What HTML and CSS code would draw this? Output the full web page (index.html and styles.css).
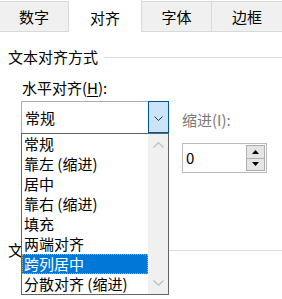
FILE: index.html
```html
<!DOCTYPE html>
<html lang="zh-CN">
<head>
    <meta charset="UTF-8">
    <title>设置单元格格式</title>
    <link rel="stylesheet" href="styles.css">
</head>
<body>

    <div class="dialog">
        <div class="tabs">
            <div class="tab tab-first">数字</div>
            <div class="tab active">对齐</div>
            <div class="tab">字体</div>
            <div class="tab tab-last">边框</div>
        </div>

        <div class="group-title"><span>文本对齐方式</span></div>

        <div class="field-label">水平对齐(<u>H</u>):</div>

        <div class="align-row">
            <div class="combo">
                <span class="combo-value">常规</span>
                <span class="combo-btn">
                    <svg width="9" height="5" viewBox="0 0 9 5"><path d="M0.5 0.5 L4.5 4.5 L8.5 0.5" fill="none" stroke="#333" stroke-width="1"/></svg>
                </span>
            </div>
            <div class="indent">
                <div class="indent-label">缩进(I):</div>
                <div class="spin">
                    <span class="spin-value">0</span>
                    <span class="spin-btns">
                        <span class="spin-btn"><svg width="7" height="4" viewBox="0 0 7 4"><path d="M0 4 L3.5 0 L7 4 Z" fill="#000"/></svg></span>
                        <span class="spin-btn"><svg width="7" height="4" viewBox="0 0 7 4"><path d="M0 0 L3.5 4 L7 0 Z" fill="#000"/></svg></span>
                    </span>
                </div>
            </div>
        </div>

        <!-- second group, mostly hidden under the open list -->
        <div class="group-title second"><span class="clipped">文</span></div>

        <div class="dropdown">
            <ul class="options">
                <li>常规</li>
                <li>靠左 (缩进)</li>
                <li>居中</li>
                <li>靠右 (缩进)</li>
                <li>填充</li>
                <li>两端对齐</li>
                <li class="selected">跨列居中</li>
                <li>分散对齐 (缩进)</li>
            </ul>
            <div class="scrollbar">
                <svg width="11" height="6" viewBox="0 0 11 6"><path d="M0.5 5.5 L5.5 0.8 L10.5 5.5" fill="none" stroke="#c2c2c2" stroke-width="1.4"/></svg>
                <svg width="11" height="6" viewBox="0 0 11 6"><path d="M0.5 0.5 L5.5 5.2 L10.5 0.5" fill="none" stroke="#c2c2c2" stroke-width="1.4"/></svg>
            </div>
        </div>
    </div>

</body>
</html>
```

FILE: styles.css
```css
* {
    margin: 0;
    padding: 0;
    box-sizing: border-box;
}

body {
    font-family: "Noto Sans CJK SC", "Noto Sans", sans-serif;
    font-size: 15px;
    color: #000;
    background-color: #fff;
    width: 282px;
    height: 299px;
    overflow: hidden;
}

.dialog {
    position: relative;
    width: 282px;
    height: 299px;
}

.tabs {
    display: flex;
    height: 32px;
}

.tab {
    width: 70px;
    margin-top: 1px;
    background-color: #f0f0f0;
    border: 1px solid #d9d9d9;
    border-left: none;
    display: flex;
    align-items: center;
    justify-content: center;
    line-height: 20px;
    padding-top: 1px;
}

.tab-first {
    width: 69px;
}

.tab-last {
    border-right: none;
}

.tab.active {
    width: 73px;
    margin-top: 0;
    background-color: #fff;
    border-top: none;
    border-bottom: none;
    padding-top: 3px;
}

.group-title {
    display: flex;
    align-items: center;
    margin-top: 15px;
    padding-left: 8px;
    line-height: 20px;
}

.group-title::after {
    content: "";
    flex: 1;
    height: 1px;
    margin-left: 6px;
    background-color: #dcdcdc;
}

.group-title.second {
    margin-top: 67px;
}

.clipped {
    display: block;
    width: 13px;
    overflow: hidden;
    white-space: nowrap;
}

.field-label {
    margin-top: 11px;
    padding-left: 22px;
    line-height: 20px;
}

.field-label u {
    text-underline-offset: 2px;
}

.align-row {
    display: flex;
    margin-top: 3px;
    padding-left: 21px;
}

.combo {
    width: 148px;
    height: 32px;
    border: 1px solid #adadad;
    border-bottom: none;
    display: flex;
}

.combo-value {
    flex: 1;
    padding-left: 3px;
    line-height: 31px;
}

.combo-btn {
    width: 21px;
    margin: -1px -1px 0 0;
    background-color: #cce4f7;
    border: 1px solid #005499;
    display: flex;
    align-items: center;
    justify-content: center;
    padding-top: 2px;
}

.indent {
    margin-left: 13px;
}

.indent-label {
    margin-top: 9px;
    line-height: 20px;
    color: #7a7a7a;
}

.spin {
    width: 85px;
    height: 30px;
    margin-top: 13px;
    border: 1px solid #b9b9b9;
    display: flex;
}

.spin-value {
    flex: 1;
    padding-left: 3px;
    line-height: 28px;
}

.spin-btns {
    width: 19px;
    margin: 1px 1px 1px 0;
    display: flex;
    flex-direction: column;
}

.spin-btn {
    flex: 1;
    background-color: #e5e5e5;
    border: 1px solid #adadad;
    display: flex;
    align-items: center;
    justify-content: center;
}

.spin-btn + .spin-btn {
    border-top: none;
}

.dropdown {
    position: absolute;
    left: 21px;
    top: 133px;
    width: 148px;
    height: 162px;
    background-color: #fff;
    border: 1px solid #646464;
    display: flex;
}

.options {
    list-style: none;
    flex: 1;
}

.options li {
    height: 20px;
    line-height: 20px;
    padding-left: 2px;
    white-space: nowrap;
}

.options li.selected {
    background-color: #0078d7;
    color: #fff;
    outline: 1px dotted #e8a03c;
    outline-offset: -1px;
}

.scrollbar {
    width: 20px;
    background-color: #f0f0f0;
    display: flex;
    flex-direction: column;
    justify-content: space-between;
    align-items: center;
    padding: 8px 0 8px;
}
```
